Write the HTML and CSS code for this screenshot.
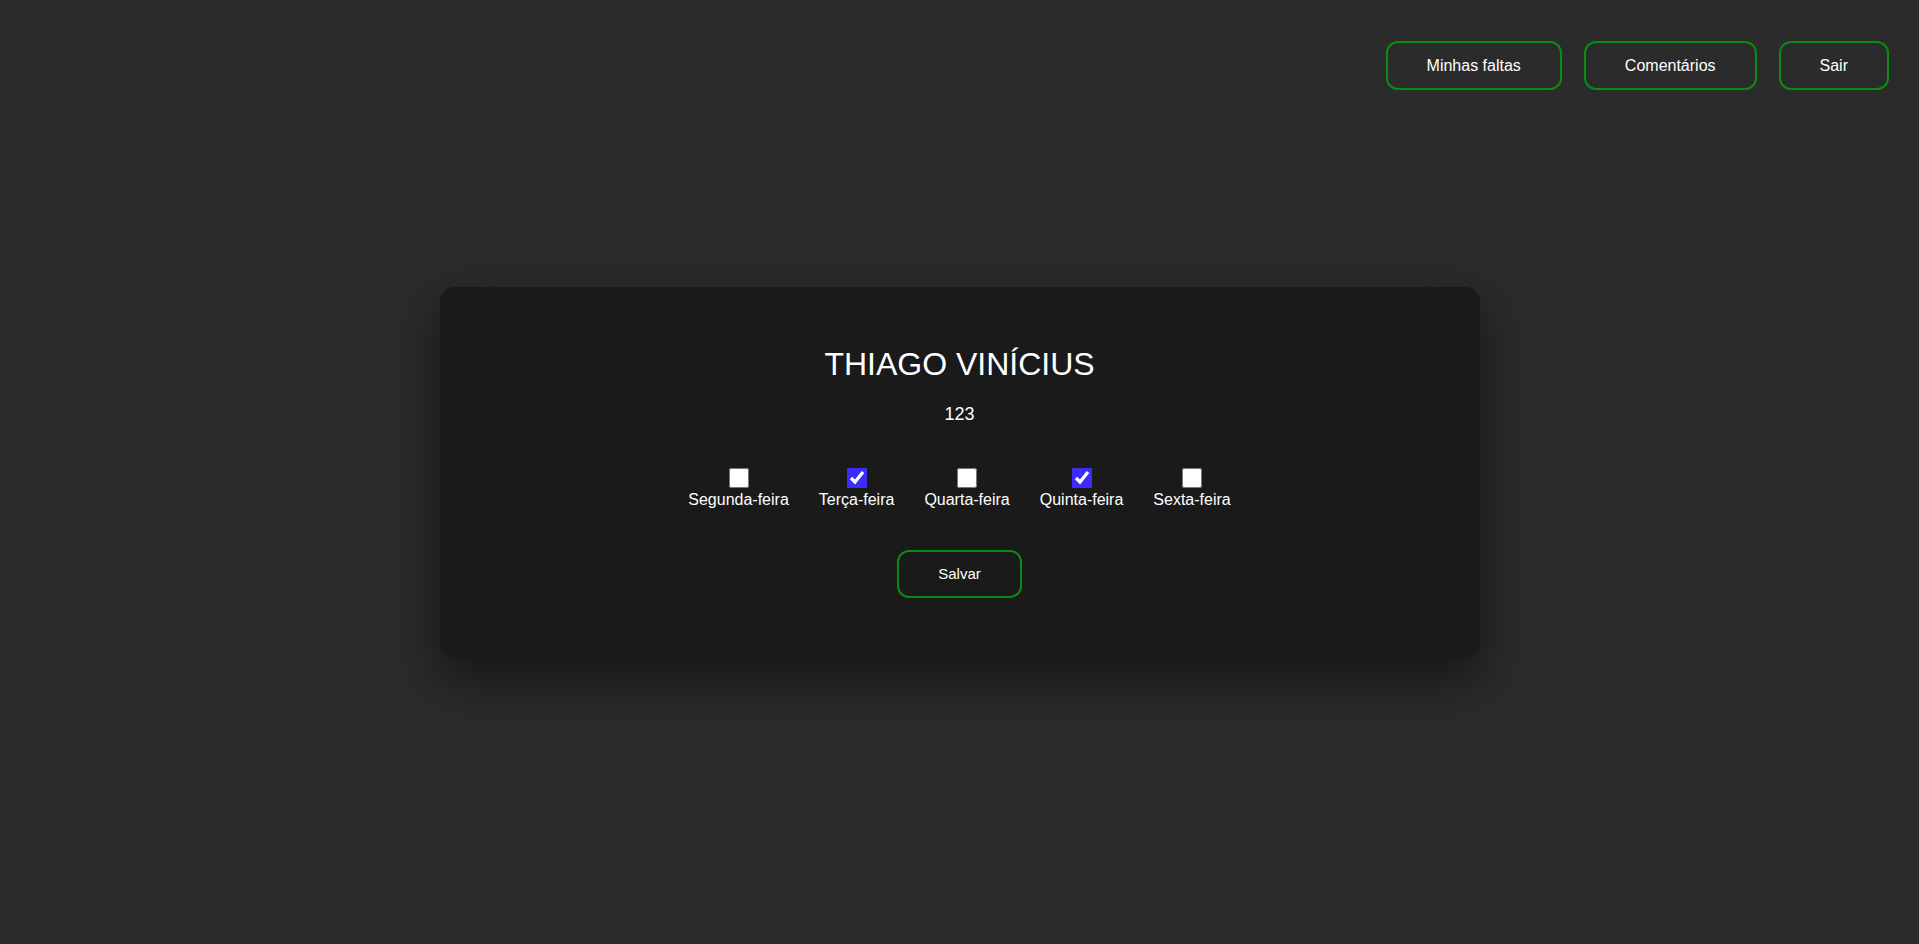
FILE: index.html
```html
<!DOCTYPE html>
<html lang="pt-BR">
<head>
<meta charset="utf-8">
<title>Presença</title>
<link rel="stylesheet" href="styles.css">
</head>
<body>
<header class="topbar">
  <a class="nav-btn" href="#">Minhas faltas</a>
  <a class="nav-btn" href="#">Comentários</a>
  <a class="nav-btn" href="#">Sair</a>
</header>
<main class="card">
  <h1 class="name">THIAGO VINÍCIUS</h1>
  <p class="code">123</p>
  <form class="days">
    <label class="day"><input type="checkbox"><span>Segunda-feira</span></label>
    <label class="day"><input type="checkbox" checked><span>Terça-feira</span></label>
    <label class="day"><input type="checkbox"><span>Quarta-feira</span></label>
    <label class="day"><input type="checkbox" checked><span>Quinta-feira</span></label>
    <label class="day"><input type="checkbox"><span>Sexta-feira</span></label>
  </form>
  <button class="save-btn" type="button">Salvar</button>
</main>
<div class="spacer"></div>
</body>
</html>
```
FILE: styles.css
```css
html, body {
  margin: 0;
  padding: 0;
}
body {
  height: 100vh;
  background: #2b2b2b;
  color: #ffffff;
  font-family: "Liberation Sans", Arial, sans-serif;
  display: grid;
  grid-template-rows: 1fr auto 1fr;
  overflow: hidden;
}
.topbar {
  display: flex;
  justify-content: flex-end;
  align-items: flex-start;
  gap: 22px;
  padding: 41px 30px 0 0;
}
.nav-btn {
  display: inline-block;
  font-size: 16px;
  line-height: normal;
  color: #ffffff;
  text-decoration: none;
  padding: 13.5px 39px;
  border: 2px solid #0b8a14;
  border-radius: 12px;
}
.card {
  justify-self: center;
  width: 1040px;
  box-sizing: border-box;
  padding: 59px 0 60px;
  background: #1a1a1a;
  border-radius: 15px;
  box-shadow: 0 20px 50px rgba(0, 0, 0, 0.5);
  display: flex;
  flex-direction: column;
  align-items: center;
}
.name {
  margin: 0 0 21px;
  font-size: 32px;
  font-weight: normal;
  line-height: normal;
}
.code {
  margin: 0 0 40px;
  font-size: 18px;
  line-height: normal;
}
.days {
  display: flex;
  gap: 30px;
  margin: 0 0 41px;
}
.day {
  display: flex;
  flex-direction: column;
  align-items: center;
  font-size: 16px;
  line-height: normal;
}
.day input {
  width: 20px;
  height: 20px;
  margin: 3px 0 3px;
  accent-color: #3a2cff;
}
.save-btn {
  font-family: "Liberation Sans", Arial, sans-serif;
  font-size: 15px;
  line-height: normal;
  color: #ffffff;
  background: transparent;
  padding: 13.5px 39px;
  border: 2px solid #0b8a14;
  border-radius: 12px;
}
```
